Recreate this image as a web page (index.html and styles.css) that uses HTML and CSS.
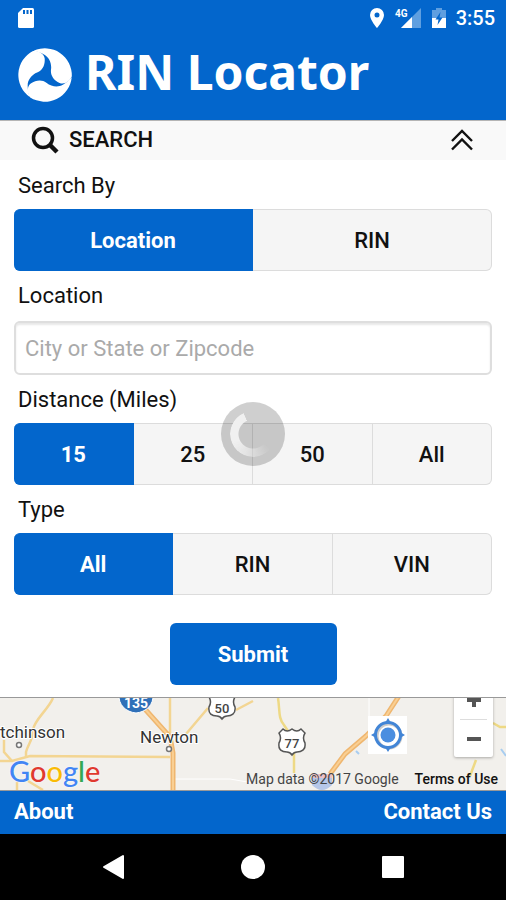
FILE: index.html
```html
<!DOCTYPE html>
<html lang="en">
<head>
<meta charset="utf-8">
<meta name="viewport" content="width=device-width, initial-scale=1">
<title>RIN Locator</title>
<link rel="stylesheet" href="styles.css">
</head>
<body>
<div class="app">
  <div class="status">
    <svg class="status-sd" width="18" height="22" viewBox="0 0 18 22" aria-hidden="true">
      <path fill="#fff" d="M6 1h9.500a1.500 1.500 0 0 1 1.500 1.500v17a1.500 1.500 0 0 1-1.500 1.500h-13A1.500 1.500 0 0 1 1 19.500V6z"/>
      <path fill="#0366cc" d="M6 3h2v4H6zM9.500 3h2v4h-2zM13 3h2v4h-2z"/>
    </svg>
    <div class="status-right">
      <svg width="16" height="22" viewBox="0 0 16 22" aria-hidden="true">
        <path fill="#fff" fill-rule="evenodd" d="M8 1a7 7 0 0 0-7 7c0 5 7 13 7 13s7-8 7-13a7 7 0 0 0-7-7zm0 4.500a2.500 2.500 0 1 1 0 5 2.500 2.500 0 0 1 0-5z"/>
      </svg>
      <svg class="status-signal" width="28" height="22" viewBox="0 0 28 22" aria-hidden="true">
        <path fill="#5f9fe0" d="M27 1v20H7z"/>
        <path fill="#fff" d="M18 10v11H7z"/>
        <text x="1" y="10">4G</text>
      </svg>
      <svg class="status-battery" width="16" height="22" viewBox="0 0 16 22" aria-hidden="true">
        <path fill="#5f9fe0" d="M5 1h6v2h4v9H1V3h4z"/>
        <path fill="#fff" d="M1 11h14v10H1z"/>
        <path fill="#0366cc" d="M9.500 5 4.500 12.500h3L6.500 18l5-7.500h-3z"/>
      </svg>
      <span>3:55</span>
    </div>
  </div>

  <header class="header">
    <svg class="logo" width="56" height="56" viewBox="-84 -84 168 168" aria-hidden="true">
      <g fill="#fff">
        <path id="lobe" d="M-36-72C-22-74-3-66-1-50C1-30-8-14-22-8C-42 0-52 16-52 32C-52 45-49 55-46 66A81 81 0 0 1-36-72z"/>
        <use href="#lobe" transform="rotate(120)"/>
        <use href="#lobe" transform="rotate(240)"/>
      </g>
    </svg>
    <h1>RIN Locator</h1>
  </header>

  <button class="search-bar" type="button">
    <svg width="28" height="28" viewBox="0 0 28 28" fill="none" stroke="#111" aria-hidden="true">
      <circle cx="12" cy="12" r="9.500" stroke-width="3.500"/>
      <path d="M18.500 18.500 26 26" stroke-width="4.500"/>
    </svg>
    <span>SEARCH</span>
    <svg class="chevrons" width="24" height="24" viewBox="0 0 24 24" fill="none" stroke="#111" stroke-width="2.400" aria-hidden="true">
      <path d="M2 13 12 3l10 10M2 21.500l10-10 10 10"/>
    </svg>
  </button>

  <form class="panel">
    <fieldset class="group">
      <legend>Search By</legend>
      <div class="segments">
        <label><input type="radio" name="by" checked><span>Location</span></label>
        <label><input type="radio" name="by"><span>RIN</span></label>
      </div>
    </fieldset>
    <div class="group">
      <label class="field-label" for="place">Location</label>
      <input class="field" id="place" type="text" placeholder="City or State or Zipcode">
    </div>
    <fieldset class="group">
      <legend>Distance (Miles)</legend>
      <div class="segments">
        <label><input type="radio" name="miles" checked><span>15</span></label>
        <label><input type="radio" name="miles"><span>25</span></label>
        <label><input type="radio" name="miles"><span>50</span></label>
        <label><input type="radio" name="miles"><span>All</span></label>
        <div class="spinner"></div>
      </div>
    </fieldset>
    <fieldset class="group">
      <legend>Type</legend>
      <div class="segments">
        <label><input type="radio" name="type" checked><span>All</span></label>
        <label><input type="radio" name="type"><span>RIN</span></label>
        <label><input type="radio" name="type"><span>VIN</span></label>
      </div>
    </fieldset>
    <button class="submit" type="button">Submit</button>
  </form>

  <section class="map" aria-label="Map">
    <svg class="map-art" viewBox="0 0 506 92" preserveAspectRatio="xMidYMid slice">
      <g fill="none" stroke="#f3d592" stroke-width="2.500">
        <path d="M53 0C48 12 34 22 33 32C33 42 28 46 26 54V60"/>
        <path d="M0 63H12L30 58L170 59"/>
        <path d="M4 42V54L12 63M28 83L43 92M17 84V92"/>
        <path d="M170 0V44M186 36L208 10M236 12L253 3"/>
        <path stroke="#eed985" d="M278 0C280 12 278 20 284 27L294 42V75"/>
        <path stroke="#eed985" d="M493 25L500 29H506M476 62L470 78"/>
      </g>
      <path d="M172 81H230L253 85M369 0V20" fill="none" stroke="#fff" stroke-width="1"/>
      <g fill="none" stroke="#efb66f" stroke-linejoin="round">
        <path stroke-width="5" d="M144 10L170 39L173 55V92"/>
        <path stroke-width="5" d="M399-2L386 18L366 38L345 56L330 76"/>
      </g>
      <path stroke="#f9cf93" stroke-width="2" fill="none" d="M144 10L170 39L173 55V92M399-2L386 18L366 38L345 56L330 76"/>
      <path stroke="#a8cdf0" stroke-width="2" fill="none" d="M356 53l3 3M501 51l5 7"/>
      <g fill="#fff" stroke="#777" stroke-width="1.500">
        <circle cx="19" cy="47" r="2.500"/>
        <circle cx="169" cy="51" r="2.500"/>
      </g>
      <path fill="#2f70b8" stroke="#fff" d="M119-4C118 7 126 14 136 15C146 14 154 7 153-4z"/>
      <text class="shield interstate" x="136" y="10">135</text>
      <path id="shield" fill="#fff" stroke="#555" stroke-width="1.500" d="M213-5Q217-1 222-5Q227-1 231-5L235-1Q232 4 235 9C236 16 231 18 227 18Q224 18 222 21Q220 18 217 18C212 18 208 16 209 9Q212 4 209-1z"/>
      <text class="shield" x="222" y="15">50</text>
      <use href="#shield" x="70" y="36"/>
      <text class="shield" x="292" y="50">77</text>
      <path fill="#b6c7e8" d="M312 79h20v8q-10 10-20 0z"/>
      <path fill="#ecc0c6" d="M312 76h20v4h-20z"/>
      <text class="place" x="0" y="40">tchinson</text>
      <text class="place" x="140" y="45">Newton</text>
    </svg>
    <div class="google"><span class="b">G</span><span class="r">o</span><span class="y">o</span><span class="b">g</span><span class="g">l</span><span class="r">e</span></div>
    <div class="credits"><span>Map data ©2017 Google</span><a href="#terms">Terms of Use</a></div>
    <button class="locate" type="button" aria-label="My location">
      <svg width="36" height="36" viewBox="0 0 36 36" fill="none" stroke="#4285d6" aria-hidden="true">
        <circle cx="19" cy="19" r="12" stroke="#ccc" stroke-width="3"/>
        <circle cx="18" cy="18" r="12.500" stroke-width="3"/>
        <circle cx="18" cy="18" r="7.500" fill="#4a8ee0" stroke="none"/>
        <path fill="#4285d6" stroke="none" d="M18 1l3 5h-6zM18 35l3-5h-6zM1 18l5-3v6zM35 18l-5-3v6z"/>
      </svg>
    </button>
    <div class="zoom">
      <button type="button" aria-label="Zoom in"><svg width="16" height="16" viewBox="0 0 16 16" aria-hidden="true"><path fill="#555" d="M6 1h4v5h5v4h-5v5H6v-5H1V6h5z"/></svg></button>
      <button type="button" aria-label="Zoom out"><svg width="16" height="16" viewBox="0 0 16 16" aria-hidden="true"><path fill="#555" d="M1 6h14v4H1z"/></svg></button>
    </div>
  </section>

  <footer class="footer"><a href="#about">About</a><a href="#contact">Contact Us</a></footer>

  <nav class="system">
    <button type="button" aria-label="Back"><svg width="24" height="26" viewBox="0 0 24 26"><path fill="#fff" stroke="#fff" stroke-width="2" stroke-linejoin="round" d="M22 2v22L3 13z"/></svg></button>
    <button type="button" aria-label="Home"><svg width="24" height="26" viewBox="0 0 24 26"><circle cx="12" cy="13" r="12" fill="#fff"/></svg></button>
    <button type="button" aria-label="Recents"><svg width="24" height="26" viewBox="0 0 24 26"><rect x="1" y="2" width="22" height="22" rx="1" fill="#fff"/></svg></button>
  </nav>
</div>
</body>
</html>
```
FILE: styles.css
```css
:root {
  --blue: #0366cc;
}

* {
  box-sizing: border-box;
}

body {
  margin: 0;
  background: #fff;
  color: #111;
  font-family: Roboto, "Liberation Sans", sans-serif;
  font-size: 22px;
}

button {
  font: inherit;
  color: inherit;
  border: 0;
  padding: 0;
  background: none;
}

svg {
  display: block;
}

.app {
  display: flex;
  flex-direction: column;
  min-height: 100vh;
}

.status {
  display: flex;
  align-items: center;
  justify-content: space-between;
  height: 36px;
  padding: 0 11px 0 17px;
  background: var(--blue);
  color: #fff;
  font-size: 20px;
  font-weight: 500;
}

.status-right {
  display: flex;
  align-items: center;
  gap: 9px;
}

.status-signal text {
  font-size: 10px;
  font-weight: 700;
  fill: #fff;
}

.header {
  display: flex;
  align-items: center;
  gap: 12px;
  height: 84px;
  padding: 0 17px 6px;
  background: var(--blue);
  color: #fff;
}

h1 {
  margin: 0;
  padding-bottom: 6px;
  font-family: "Noto Sans", "Open Sans", sans-serif;
  font-size: 48px;
  line-height: 56px;
  font-weight: 700;
}

.search-bar {
  display: flex;
  align-items: center;
  gap: 10px;
  height: 40px;
  padding: 0 32px 2px 31px;
  border-top: 1px solid #b5b5b5;
  background: #f9f9f9;
  font-weight: 500;
}

.chevrons {
  margin-left: auto;
}

.panel {
  display: flex;
  flex-direction: column;
  gap: 13px;
  padding: 14px 14px 12px;
}

.group {
  min-width: 0;
  margin: 0;
  padding: 0;
  border: 0;
}

legend,
.field-label {
  display: block;
  margin-bottom: 11px;
  padding: 0 4px;
  line-height: 24px;
}

.field-label {
  margin-bottom: 13px;
}

.segments {
  display: flex;
  position: relative;
  height: 62px;
}

.segments label {
  flex: 1;
  display: flex;
  position: relative;
}

.segments input {
  position: absolute;
  inset: 0;
  margin: 0;
  opacity: 0;
}

.segments span {
  flex: 1;
  display: flex;
  align-items: center;
  justify-content: center;
  border: solid #dcdcdc;
  border-width: 1px 1px 1px 0;
  background: #f5f5f5;
  font-weight: 500;
}

.segments label:first-child span {
  border-radius: 6px 0 0 6px;
}

.segments label:last-of-type span {
  border-radius: 0 6px 6px 0;
}

.segments input:checked + span {
  border-color: var(--blue);
  background: var(--blue);
  color: #fff;
  font-weight: 700;
}

.field {
  display: block;
  width: 100%;
  height: 54px;
  padding: 0 9px;
  border: 2px solid #dedede;
  border-radius: 6px;
  box-shadow: inset 0 2px 2px #e8e8e8;
  background: #fff;
  font: inherit;
}

.field::placeholder {
  color: #aaa;
}

.spinner {
  position: absolute;
  left: 50%;
  top: -21px;
  width: 64px;
  height: 64px;
  margin-left: -32px;
  border-radius: 50%;
  background: rgba(0, 0, 0, 0.19);
}

.spinner::before {
  content: "";
  position: absolute;
  inset: 9px;
  border-radius: 50%;
  background: conic-gradient(transparent 0 130deg, rgba(255, 255, 255, 0.5) 200deg, #f0f0f0 250deg 335deg, transparent 336deg);
  mask: radial-gradient(circle, transparent 14px, #000 15px);
}

.submit {
  align-self: center;
  width: 167px;
  height: 62px;
  margin-top: 15px;
  border-radius: 6px;
  background: var(--blue);
  color: #fff;
  font-weight: 700;
}

.map {
  flex: 1;
  position: relative;
  min-height: 94px;
  border: solid #999;
  border-width: 1px 0;
  overflow: hidden;
  background: #f2f0ec;
}

.map-art {
  position: absolute;
  width: 100%;
  height: 100%;
}

.place {
  font-size: 17px;
  fill: #333;
  stroke: #fff;
  stroke-width: 2px;
  paint-order: stroke;
}

.shield {
  font-size: 13px;
  font-weight: 500;
  fill: #444;
  text-anchor: middle;
}

.interstate {
  font-size: 14px;
  font-weight: 700;
  fill: #fff;
}

.google {
  position: absolute;
  left: 9px;
  bottom: 2px;
  font-family: Lato, sans-serif;
  font-size: 29px;
  line-height: 34px;
  font-weight: 500;
  text-shadow: 0 0 2px #fff;
}

.b { color: #4285f4; }
.r { color: #e0392f; }
.y { color: #f9bb05; }
.g { color: #34a853; }

.credits {
  display: flex;
  gap: 16px;
  position: absolute;
  right: 8px;
  bottom: 2px;
  color: #444;
  font-size: 14px;
  line-height: 18px;
}

.credits a {
  color: #111;
  font-weight: 500;
  text-decoration: none;
}

.locate {
  display: grid;
  place-items: center;
  position: absolute;
  right: 99px;
  top: 18px;
  width: 39px;
  height: 38px;
  background: #fff;
}

.zoom {
  position: absolute;
  right: 13px;
  top: -17px;
  width: 39px;
  padding: 0 6px;
  border-radius: 2px;
  background: #fff;
  box-shadow: 0 1px 3px rgba(0, 0, 0, 0.3);
}

.zoom button {
  display: grid;
  place-items: center;
  width: 100%;
  height: 38px;
}

.zoom button + button {
  border-top: 1px solid #ddd;
}

.footer {
  display: flex;
  align-items: center;
  justify-content: space-between;
  height: 43px;
  padding: 0 14px 2px;
  background: var(--blue);
}

.footer a {
  color: #fff;
  font-weight: 700;
  text-decoration: none;
}

.system {
  display: flex;
  align-items: center;
  justify-content: center;
  gap: 116px;
  height: 66px;
  background: #000;
}
```
